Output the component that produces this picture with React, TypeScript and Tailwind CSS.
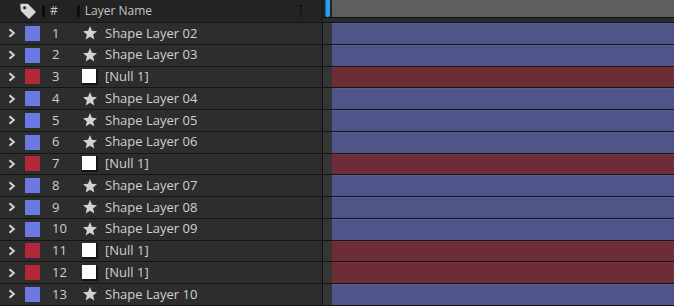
import React from 'react';

type Layer = { num: number; name: string; kind: 'shape' | 'null' };

const layers: Layer[] = [
  { num: 1, name: 'Shape Layer 02', kind: 'shape' },
  { num: 2, name: 'Shape Layer 03', kind: 'shape' },
  { num: 3, name: '[Null 1]', kind: 'null' },
  { num: 4, name: 'Shape Layer 04', kind: 'shape' },
  { num: 5, name: 'Shape Layer 05', kind: 'shape' },
  { num: 6, name: 'Shape Layer 06', kind: 'shape' },
  { num: 7, name: '[Null 1]', kind: 'null' },
  { num: 8, name: 'Shape Layer 07', kind: 'shape' },
  { num: 9, name: 'Shape Layer 08', kind: 'shape' },
  { num: 10, name: 'Shape Layer 09', kind: 'shape' },
  { num: 11, name: '[Null 1]', kind: 'null' },
  { num: 12, name: '[Null 1]', kind: 'null' },
  { num: 13, name: 'Shape Layer 10', kind: 'shape' },
];

const Chevron = () => (
  <svg width="8" height="10" viewBox="0 0 8 10" className="ml-[8px]">
    <path d="M1.5 1.2 L5.8 5 L1.5 8.8" fill="none" stroke="#d4d4d4" strokeWidth="2" />
  </svg>
);

const Star = () => (
  <svg width="16" height="16" viewBox="0 0 24 24">
    <path
      d="M12 1.5 L14.9 8.6 L22.5 9.2 L16.7 14.1 L18.5 21.6 L12 17.6 L5.5 21.6 L7.3 14.1 L1.5 9.2 L9.1 8.6 Z"
      fill="#d2d2d2"
    />
  </svg>
);

const TagIcon = () => (
  <svg width="16" height="16" viewBox="0 0 16 16">
    <path
      d="M1 1.5 L7.5 1.5 L15 9 L9 15 L1.5 7.5 Z"
      fill="#d6d6d6"
      strokeLinejoin="round"
      stroke="#d6d6d6"
      strokeWidth="1.5"
    />
    <circle cx="4.6" cy="4.8" r="1.5" fill="#232323" />
  </svg>
);

const Sep = ({ className = '' }: { className?: string }) => (
  <div className={`w-[3px] h-[12px] bg-[#0e0e0e] rounded-[1px] ${className}`} />
);

const LayerRow = ({ layer }: { layer: Layer }) => {
  const isNull = layer.kind === 'null';
  return (
    <div className="flex h-[21.75px] border-t border-[#151515]">
      <div className="w-[322px] flex items-center bg-[#2d2d2d]">
        <div className="w-[25px] flex items-center">
          <Chevron />
        </div>
        <div className={`w-[15px] h-[15px] ${isNull ? 'bg-[#b0283a]' : 'bg-[#6b79e2]'}`} />
        <div className="w-[42px] pl-[12px] text-[13px] text-[#cfcfcf]">{layer.num}</div>
        <div className="w-[23px] flex items-center">
          {isNull ? (
            <div className="w-[16px] h-[16px] bg-white border-r-2 border-b-2 border-[#141414]" />
          ) : (
            <Star />
          )}
        </div>
        <div className="text-[13px] text-[#d0d0d0] whitespace-nowrap">{layer.name}</div>
      </div>
      <div className="w-px bg-[#0f0f0f]" />
      <div className="w-[9px] bg-[#353535]" />
      <div className={`flex-1 border-t ${isNull ? 'bg-[#6c2d37] border-[#763440]' : 'bg-[#4f5588] border-[#585e9a]'}`} />
    </div>
  );
};

export default function App() {
  return (
    <div
      className="w-[674px] h-[306px] overflow-hidden bg-[#141414] select-none"
      style={{ fontFamily: '"Open Sans", "Noto Sans", sans-serif' }}
    >
      <div className="flex h-[22px]">
        <div className="w-[322px] flex items-center bg-[#232323] text-[12px] text-[#c4c4c4]">
          <div className="ml-[20px]">
            <TagIcon />
          </div>
          <Sep className="ml-[6px]" />
          <div className="ml-[5px]">#</div>
          <Sep className="ml-[19px]" />
          <div className="ml-[5px]">Layer Name</div>
          <div className="ml-auto mr-[20px] w-[2px] h-[12px] border-x border-dotted border-[#0e0e0e]" />
        </div>
        <div className="w-px bg-[#1a1a1a]" />
        <div className="flex-1 flex flex-col bg-[#232323]">
          <div className="flex h-[17px]">
            <div className="w-[2px] bg-[#232323]" />
            <div className="w-[5px] bg-[#2a9df4] rounded-b-[2px] border-l border-[#1565a8]" />
            <div className="w-[2px] bg-[#232323]" />
            <div className="flex-1 bg-[#5e5e5e]" />
          </div>
          <div className="h-px bg-[#111111]" />
          <div className="flex-1 bg-[#2b2b2b]" />
        </div>
      </div>
      {layers.map((l) => (
        <LayerRow key={l.num} layer={l} />
      ))}
    </div>
  );
}
